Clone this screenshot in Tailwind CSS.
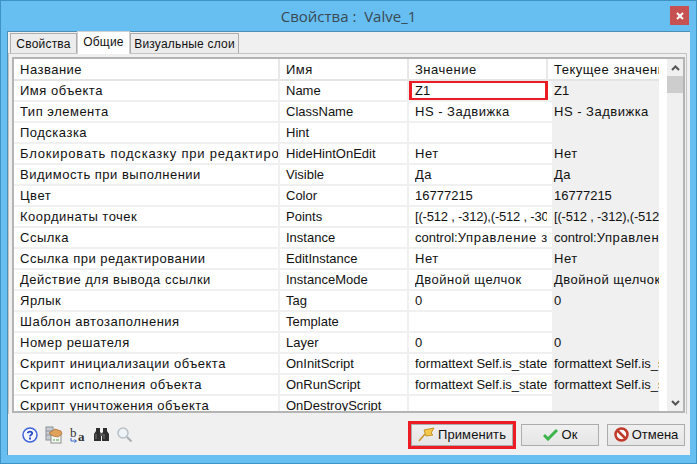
<!DOCTYPE html>
<html lang="en">
<head>
<meta charset="UTF-8" />
<title>Свойства</title>
<script src="https://cdn.jsdelivr.net/npm/@tailwindcss/browser@4"></script>
</head>
<body class="m-0 overflow-hidden">
<!-- window frame -->
<div class="w-[697px] h-[464px] flex flex-col bg-[#67bef0] border border-[#3f93c4] px-[6px] pb-[8px] font-['Liberation_Sans',sans-serif] text-[13px] text-[#111]">
  <!-- title bar -->
  <div class="relative h-[30px] shrink-0 flex items-center justify-center text-[15px] text-[#3a4a55] font-['Open_Sans',sans-serif]">
    <span class="whitespace-pre">Свойства :  Valve_1</span>
    <div class="absolute right-[1px] top-[5px] w-[19px] h-[19px] bg-[#c75050] text-white flex items-center justify-center">
      <svg width="8" height="8" viewBox="0 0 8 8"><path d="M1 1L7 7M7 1L1 7" stroke="#fff" stroke-width="2"/></svg>
    </div>
  </div>
  <!-- client area -->
  <div class="flex-1 flex flex-col bg-[#f0f0f0] border border-[#4d8fb5] border-b-0 border-r-0 pr-[3px]">
    <!-- tabs -->
    <div class="h-[21px] flex items-end pl-[2px] shrink-0 text-[12px] tracking-[0.2px] whitespace-nowrap">
      <div class="h-[20px] w-[67px] border border-[#acacac] border-b-0 bg-[#ececec] flex items-center justify-center">Свойства</div>
      <div class="h-[23px] w-[53px] border border-[#d0d0d0] border-b-0 bg-white flex items-center justify-center pb-[3px] -mb-[1px] relative">Общие</div>
      <div class="h-[20px] w-[109px] border border-[#acacac] border-b-0 bg-[#ececec] flex items-center justify-center">Визуальные слои</div>
    </div>
    <!-- tab page -->
    <div class="h-[361px] border-t border-r border-l border-[#c4c4c4] pt-[3px] pl-[3px] pr-[1px]">
      <div class="h-[356px] border-2 border-[#b4b4b4] bg-white flex overflow-hidden">
        <div class="w-[645px] shrink-0 overflow-hidden">
          <!-- header -->
          <div class="grid grid-cols-[266px_129px_139px_111px] h-[22px] border-b-2 border-[#e4e4e4] leading-[21px]">
            <div class="pl-[6px] border-r-2 border-[#e8e8e8] tracking-[0.5px]">Название</div>
            <div class="pl-[6px] border-r-2 border-[#e8e8e8] tracking-[0.5px]">Имя</div>
            <div class="pl-[6px] border-r-2 border-[#e8e8e8] tracking-[0.5px]">Значение</div>
            <div class="pl-[6px] overflow-hidden whitespace-nowrap tracking-[0.5px]">Текущее значение</div>
          </div>
          <!-- rows -->
          <div class="grid grid-cols-[266px_129px_143px_107px] auto-rows-[21px] leading-[20px] whitespace-nowrap [&>div]:overflow-hidden [&>div]:border-b-2 [&>div]:border-[#f0f0f0] [&>div:nth-child(4n+1)]:tracking-[0.5px]">
            <div class="pl-[6px] border-r-2">Имя объекта</div><div class="pl-[6px] border-r-2">Name</div><div class="relative pl-[6px]"><span>Z1</span><div class="absolute left-0 top-[-1px] w-[139px] h-[21px] border-[3px] border-[#ed1c24]"></div></div><div class="pl-[2px] bg-[#f0f0f0]">Z1</div>
            <div class="pl-[6px] border-r-2">Тип элемента</div><div class="pl-[6px] border-r-2">ClassName</div><div class="pl-[6px] pr-[5px]"><div class="overflow-hidden tracking-[0.5px]">HS - Задвижка</div></div><div class="pl-[2px] bg-[#f0f0f0] tracking-[0.5px]">HS - Задвижка</div>
            <div class="pl-[6px] border-r-2">Подсказка</div><div class="pl-[6px] border-r-2">Hint</div><div class="pl-[6px]"></div><div class="pl-[2px] bg-[#f0f0f0]"></div>
            <div class="pl-[6px] border-r-2"><span class="tracking-[0.8px]">Блокировать подсказку при редактировании</span></div><div class="pl-[6px] border-r-2">HideHintOnEdit</div><div class="pl-[6px] pr-[5px]"><div class="overflow-hidden tracking-[0.5px]">Нет</div></div><div class="pl-[2px] bg-[#f0f0f0] tracking-[0.5px]">Нет</div>
            <div class="pl-[6px] border-r-2">Видимость при выполнении</div><div class="pl-[6px] border-r-2">Visible</div><div class="pl-[6px] pr-[5px]"><div class="overflow-hidden tracking-[0.5px]">Да</div></div><div class="pl-[2px] bg-[#f0f0f0] tracking-[0.5px]">Да</div>
            <div class="pl-[6px] border-r-2">Цвет</div><div class="pl-[6px] border-r-2">Color</div><div class="pl-[6px] pr-[5px]"><div class="overflow-hidden">16777215</div></div><div class="pl-[2px] bg-[#f0f0f0]">16777215</div>
            <div class="pl-[6px] border-r-2">Координаты точек</div><div class="pl-[6px] border-r-2">Points</div><div class="pl-[6px] pr-[5px]"><div class="overflow-hidden tracking-[-0.2px]">[(-512 , -312),(-512 , -302),(-492 , -302)]</div></div><div class="pl-[2px] bg-[#f0f0f0] tracking-[-0.2px]">[(-512 , -312),(-512 , -302)]</div>
            <div class="pl-[6px] border-r-2">Ссылка</div><div class="pl-[6px] border-r-2">Instance</div><div class="pl-[6px] pr-[5px]"><div class="overflow-hidden">control:<span class="tracking-[0.7px]">Управление задвижкой</span></div></div><div class="pl-[2px] bg-[#f0f0f0]">control:<span class="tracking-[0.6px]">Управление задвижкой</span></div>
            <div class="pl-[6px] border-r-2">Ссылка при редактировании</div><div class="pl-[6px] border-r-2">EditInstance</div><div class="pl-[6px] pr-[5px]"><div class="overflow-hidden tracking-[0.5px]">Нет</div></div><div class="pl-[2px] bg-[#f0f0f0] tracking-[0.5px]">Нет</div>
            <div class="pl-[6px] border-r-2">Действие для вывода ссылки</div><div class="pl-[6px] border-r-2">InstanceMode</div><div class="pl-[6px] pr-[5px]"><div class="overflow-hidden tracking-[0.5px]">Двойной щелчок</div></div><div class="pl-[2px] bg-[#f0f0f0] tracking-[0.5px]">Двойной щелчок</div>
            <div class="pl-[6px] border-r-2">Ярлык</div><div class="pl-[6px] border-r-2">Tag</div><div class="pl-[6px] pr-[5px]"><div class="overflow-hidden">0</div></div><div class="pl-[2px] bg-[#f0f0f0]">0</div>
            <div class="pl-[6px] border-r-2">Шаблон автозаполнения</div><div class="pl-[6px] border-r-2">Template</div><div class="pl-[6px]"></div><div class="pl-[2px] bg-[#f0f0f0]"></div>
            <div class="pl-[6px] border-r-2">Номер решателя</div><div class="pl-[6px] border-r-2">Layer</div><div class="pl-[6px] pr-[5px]"><div class="overflow-hidden">0</div></div><div class="pl-[2px] bg-[#f0f0f0]">0</div>
            <div class="pl-[6px] border-r-2">Скрипт инициализации объекта</div><div class="pl-[6px] border-r-2">OnInitScript</div><div class="pl-[6px] pr-[5px]"><div class="overflow-hidden">formattext Self.is_state</div></div><div class="pl-[2px] bg-[#f0f0f0]">formattext Self.is_state</div>
            <div class="pl-[6px] border-r-2">Скрипт исполнения объекта</div><div class="pl-[6px] border-r-2">OnRunScript</div><div class="pl-[6px] pr-[5px]"><div class="overflow-hidden">formattext Self.is_state</div></div><div class="pl-[2px] bg-[#f0f0f0]">formattext Self.is_state</div>
            <div class="pl-[6px] border-r-2">Скрипт уничтожения объекта</div><div class="pl-[6px] border-r-2">OnDestroyScript</div><div class="pl-[6px]"></div><div class="pl-[2px] bg-[#f0f0f0]"></div>
          </div>
        </div>
        <!-- scrollbar -->
        <div class="ml-[8px] w-[16px] bg-[#f0f0f0] flex flex-col items-center">
          <div class="h-[17px] flex items-center justify-center"><svg width="9" height="6" viewBox="0 0 9 6"><path d="M1 5L4.500 1.500L8 5" fill="none" stroke="#555" stroke-width="2"/></svg></div>
          <div class="w-full h-[17px] bg-[#cdcdcd]"></div>
          <div class="flex-1"></div>
          <div class="h-[17px] flex items-center justify-center"><svg width="9" height="6" viewBox="0 0 9 6"><path d="M1 1L4.500 4.500L8 1" fill="none" stroke="#555" stroke-width="2"/></svg></div>
        </div>
      </div>
    </div>
    <!-- footer -->
    <div class="flex-1 flex items-center pl-[13px] pr-[2px]">
      <div class="flex items-center gap-[6px] h-[20px]">
        <svg width="18" height="18" viewBox="0 0 18 18"><circle cx="9" cy="9" r="7" fill="#f4f6ff" stroke="#3f63d8" stroke-width="1.500"/><path d="M6.800 7.200C6.800 5 11.200 5 11.200 7.200C11.200 8.800 9 8.700 9 10.500" fill="none" stroke="#2a4cc8" stroke-width="1.800"/><rect x="8" y="11.500" width="2" height="2" fill="#2a4cc8"/></svg>
        <svg width="18" height="18" viewBox="0 0 18 18"><rect x="1" y="1" width="7" height="13" fill="#c9ccd2" stroke="#8a8f98"/><path d="M1 5H8M1 9H8" stroke="#8a8f98"/><rect x="6" y="9" width="10" height="8" fill="#f6f6f2" stroke="#8a8f88"/><path d="M8 14H10M11 14H14" stroke="#4a9a4a"/><path d="M4 7L10 3L16 5L17 8L13 11L8 10Z" fill="#dfa15c" stroke="#a4682c" stroke-width="0.700"/></svg>
        <div class="relative ml-[1px] w-[16px] h-[18px] font-['Liberation_Serif',serif] text-[#333] leading-none">
          <span class="absolute left-0 top-0 text-[13px]">b</span>
          <span class="absolute left-[8px] top-[4px] text-[13px] font-bold">a</span>
          <svg class="absolute left-0 top-[12px]" width="8" height="6" viewBox="0 0 8 6"><path d="M1 0V3H6M4.500 1.500L6.500 3L4.500 4.500" fill="none" stroke="#3465c8"/></svg>
        </div>
        <svg width="17" height="17" class="ml-[1px]" viewBox="0 0 17 17"><path d="M3 2H7V6L8 7V15H1V8L3 5ZM10 2H14V5L16 8V15H9V7L10 6Z" fill="#2e2e2e"/><path d="M7 7H10V10H7Z" fill="#555"/><path d="M3 8V13M11 8V13" stroke="#777"/></svg>
        <svg width="17" height="17" viewBox="0 0 17 17"><circle cx="7" cy="7" r="5" fill="#eef3f7" stroke="#b8c0c6" stroke-width="1.500"/><path d="M11 11L15.500 15.500" stroke="#aab0b6" stroke-width="2.200"/></svg>
      </div>
      <div class="ml-auto flex items-center gap-[5px]">
        <div class="border-[3px] border-[#ed1c24]">
          <button class="w-[102px] h-[22px] border border-[#acacac] bg-gradient-to-b from-[#f0f0f0] to-[#e5e5e5] flex items-center justify-center gap-[3px] tracking-[0.1px]">
            <svg width="17" height="15" viewBox="0 0 17 15"><path d="M1 14L7 7" stroke="#c9952a" stroke-width="1.500"/><path d="M6 3L16 1L13 6L15 8L8 9Z" fill="#f4c84a" stroke="#c9952a" stroke-linejoin="round"/></svg>
            <span>Применить</span>
          </button>
        </div>
        <button class="w-[78px] h-[22px] border border-[#acacac] bg-gradient-to-b from-[#f0f0f0] to-[#e5e5e5] flex items-center justify-center gap-[4px]">
          <svg width="15" height="13" viewBox="0 0 15 13"><path d="M1 7L5 11L14 2" fill="none" stroke="#3db54a" stroke-width="3"/></svg>
          <span>Ок</span>
        </button>
        <button class="ml-[3px] w-[78px] h-[22px] border border-[#acacac] bg-gradient-to-b from-[#f0f0f0] to-[#e5e5e5] flex items-center justify-center gap-[3px]">
          <svg width="15" height="15" viewBox="0 0 15 15"><circle cx="7.500" cy="7.500" r="6" fill="#fff" stroke="#c0392b" stroke-width="2.500"/><path d="M3.500 3.500L11.500 11.500" stroke="#c0392b" stroke-width="2.500"/></svg>
          <span>Отмена</span>
        </button>
      </div>
    </div>
  </div>
</div>
</body>
</html>
